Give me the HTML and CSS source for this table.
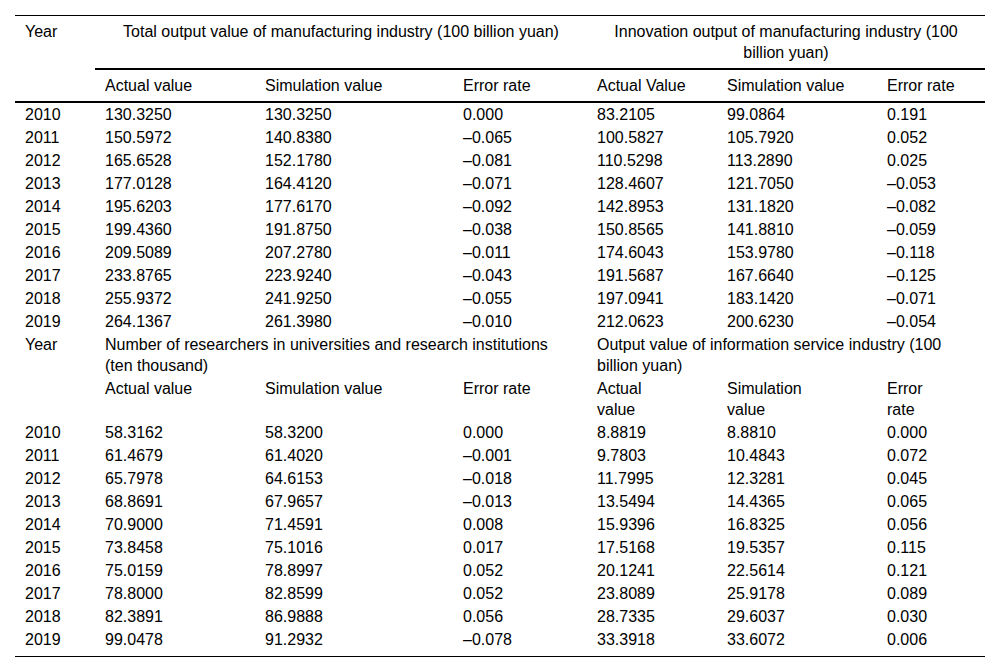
FILE: index.html
```html
<!DOCTYPE html>
<html>
<head>
<meta charset="utf-8">
<link rel="stylesheet" href="styles.css">
</head>
<body>
<table class="data">
  <colgroup>
    <col class="c-year"><col class="c-a1"><col class="c-s1"><col class="c-e1"><col class="c-a2"><col class="c-s2"><col class="c-e2">
  </colgroup>
  <thead>
    <tr class="group">
      <th class="year">Year</th>
      <th colspan="3" class="gh">Total output value of manufacturing industry (100 billion yuan)</th>
      <th colspan="3" class="gh">Innovation output of manufacturing industry (100 billion yuan)</th>
    </tr>
    <tr class="sub">
      <th></th>
      <th>Actual value</th><th>Simulation value</th><th>Error rate</th>
      <th>Actual Value</th><th>Simulation value</th><th>Error rate</th>
    </tr>
  </thead>
  <tbody>
    <tr><td>2010</td><td>130.3250</td><td>130.3250</td><td>0.000</td><td>83.2105</td><td>99.0864</td><td>0.191</td></tr>
    <tr><td>2011</td><td>150.5972</td><td>140.8380</td><td>–0.065</td><td>100.5827</td><td>105.7920</td><td>0.052</td></tr>
    <tr><td>2012</td><td>165.6528</td><td>152.1780</td><td>–0.081</td><td>110.5298</td><td>113.2890</td><td>0.025</td></tr>
    <tr><td>2013</td><td>177.0128</td><td>164.4120</td><td>–0.071</td><td>128.4607</td><td>121.7050</td><td>–0.053</td></tr>
    <tr><td>2014</td><td>195.6203</td><td>177.6170</td><td>–0.092</td><td>142.8953</td><td>131.1820</td><td>–0.082</td></tr>
    <tr><td>2015</td><td>199.4360</td><td>191.8750</td><td>–0.038</td><td>150.8565</td><td>141.8810</td><td>–0.059</td></tr>
    <tr><td>2016</td><td>209.5089</td><td>207.2780</td><td>–0.011</td><td>174.6043</td><td>153.9780</td><td>–0.118</td></tr>
    <tr><td>2017</td><td>233.8765</td><td>223.9240</td><td>–0.043</td><td>191.5687</td><td>167.6640</td><td>–0.125</td></tr>
    <tr><td>2018</td><td>255.9372</td><td>241.9250</td><td>–0.055</td><td>197.0941</td><td>183.1420</td><td>–0.071</td></tr>
    <tr><td>2019</td><td>264.1367</td><td>261.3980</td><td>–0.010</td><td>212.0623</td><td>200.6230</td><td>–0.054</td></tr>
    <tr>
      <td>Year</td>
      <td colspan="3" class="note">Number of researchers in universities and research institutions (ten thousand)</td>
      <td colspan="3">Output value of information service industry (100 billion yuan)</td>
    </tr>
    <tr>
      <td></td>
      <td>Actual value</td><td>Simulation value</td><td>Error rate</td>
      <td>Actual<br>value</td><td>Simulation<br>value</td><td>Error<br>rate</td>
    </tr>
    <tr><td>2010</td><td>58.3162</td><td>58.3200</td><td>0.000</td><td>8.8819</td><td>8.8810</td><td>0.000</td></tr>
    <tr><td>2011</td><td>61.4679</td><td>61.4020</td><td>–0.001</td><td>9.7803</td><td>10.4843</td><td>0.072</td></tr>
    <tr><td>2012</td><td>65.7978</td><td>64.6153</td><td>–0.018</td><td>11.7995</td><td>12.3281</td><td>0.045</td></tr>
    <tr><td>2013</td><td>68.8691</td><td>67.9657</td><td>–0.013</td><td>13.5494</td><td>14.4365</td><td>0.065</td></tr>
    <tr><td>2014</td><td>70.9000</td><td>71.4591</td><td>0.008</td><td>15.9396</td><td>16.8325</td><td>0.056</td></tr>
    <tr><td>2015</td><td>73.8458</td><td>75.1016</td><td>0.017</td><td>17.5168</td><td>19.5357</td><td>0.115</td></tr>
    <tr><td>2016</td><td>75.0159</td><td>78.8997</td><td>0.052</td><td>20.1241</td><td>22.5614</td><td>0.121</td></tr>
    <tr><td>2017</td><td>78.8000</td><td>82.8599</td><td>0.052</td><td>23.8089</td><td>25.9178</td><td>0.089</td></tr>
    <tr><td>2018</td><td>82.3891</td><td>86.9888</td><td>0.056</td><td>28.7335</td><td>29.6037</td><td>0.030</td></tr>
    <tr class="last"><td>2019</td><td>99.0478</td><td>91.2932</td><td>–0.078</td><td>33.3918</td><td>33.6072</td><td>0.006</td></tr>
  </tbody>
</table>
</body>
</html>
```

FILE: styles.css
```css
html, body {
  margin: 0;
  padding: 0;
  background: #fff;
}
body {
  padding: 15px 15px 0 15px;
  font-family: "Liberation Sans", Arial, sans-serif;
  font-size: 16px;
  line-height: 21px;
  color: #000;
}
.data {
  width: 970px;
  border-collapse: collapse;
  table-layout: fixed;
  border-top: 1px solid #000;
  border-bottom: 1px solid #000;
}
.c-year { width: 80px; }
.c-a1 { width: 160px; }
.c-s1 { width: 198px; }
.c-e1 { width: 134px; }
.c-a2 { width: 130px; }
.c-s2 { width: 160px; }
.c-e2 { width: 108px; }
.data th,
.data td {
  padding: 1px 10px;
  text-align: left;
  vertical-align: top;
  font-weight: normal;
}
.data thead th {
  padding-top: 5px;
  padding-bottom: 5px;
}
.data .gh {
  text-align: center;
  border-bottom: 2px solid #000;
}
.data .sub th {
  border-bottom: 2px solid #000;
}
.data td.note {
  padding-right: 30px;
}
.data tr.last td {
  padding-bottom: 6px;
}
```
